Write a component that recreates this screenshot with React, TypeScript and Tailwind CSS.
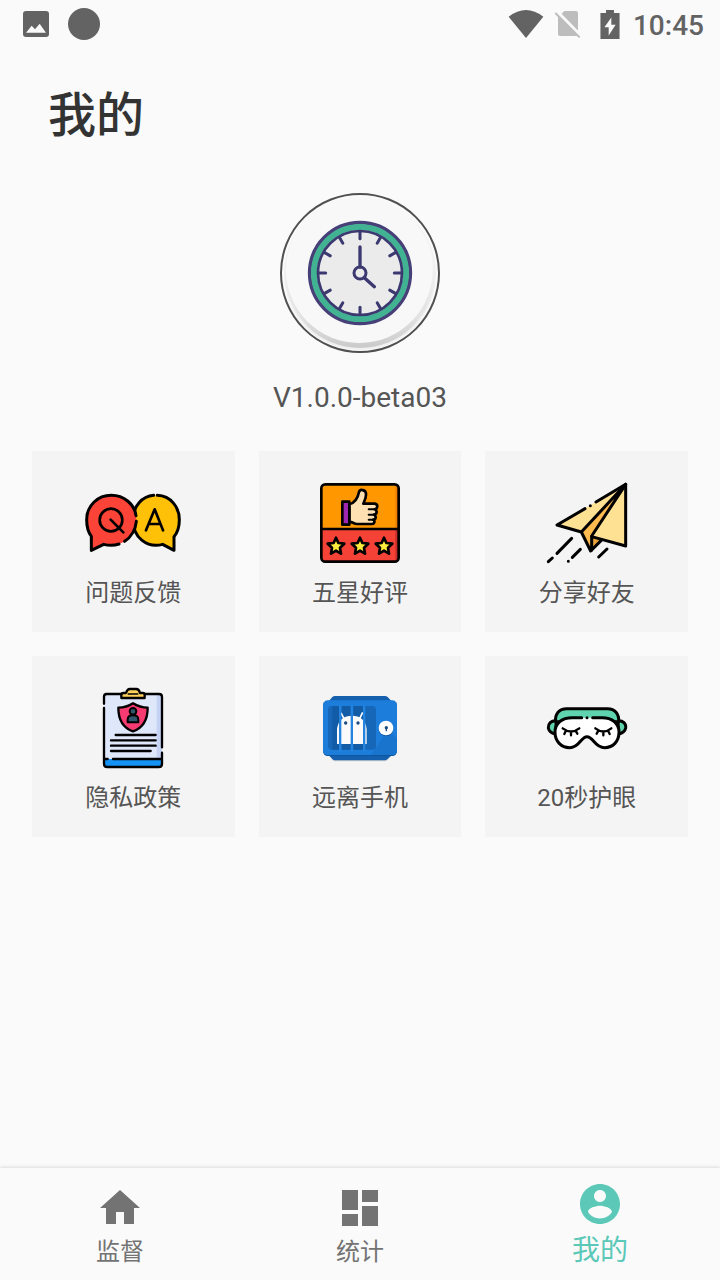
import { useState } from 'react'
import type { ComponentType } from 'react'
import { MdDashboard, MdHome } from 'react-icons/md'

const STAR = 'M0 -25 L7 -9 L25 -7 L12 5 L15 23 L0 14 L-15 23 L-12 5 L-25 -7 L-7 -9 Z'

function ClockLogo() {
  const ticks = [0, 30, 60, 90, 120, 150, 180, 210, 240, 270, 300, 330]
  return (
    <svg className="size-40" viewBox="0 0 480 480" aria-hidden>
      <defs>
        <linearGradient id="rim" x1="0" y1="0" x2="0" y2="1">
          <stop offset="0.3" stopColor="#f8f8f8" />
          <stop offset="0.8" stopColor="#e2e2e2" />
          <stop offset="1" stopColor="#cacaca" />
        </linearGradient>
      </defs>
      <circle cx="240" cy="240" r="237" fill="#fafafa" />
      <circle cx="240" cy="243" r="228" fill="#f0f0f0" />
      <circle cx="240" cy="241" r="224" fill="url(#rim)" />
      <circle cx="238" cy="230" r="220" fill="#f8f8f8" />
      <circle cx="240" cy="240" r="237" fill="none" stroke="#505050" strokeWidth="6" />
      <circle cx="240" cy="240" r="127" fill="#ebebeb" />
      <circle cx="240" cy="240" r="151" fill="none" stroke="#463f78" strokeWidth="11" />
      <circle cx="240" cy="240" r="138" fill="none" stroke="#41b393" strokeWidth="18" />
      <circle cx="240" cy="240" r="126" fill="none" stroke="#3b3970" strokeWidth="8" />
      <g stroke="#3b3970" strokeWidth="9" strokeLinecap="round" fill="none">
        {ticks.map((deg) => (
          <path key={deg} d="M240 116 V137" transform={`rotate(${deg} 240 240)`} />
        ))}
        <path d="M240 222 V162 M253 254 L283 281" strokeWidth="10" />
        <circle cx="240" cy="240" r="18" strokeWidth="9" />
      </g>
    </svg>
  )
}

function QuestionIcon() {
  return (
    <svg className="size-24" viewBox="33 -15 288 288" aria-hidden>
      <g stroke="#000" strokeWidth="9" strokeLinecap="round" strokeLinejoin="round">
        <path
          d="M250 46 C291 48 316 82 316 119 C316 142 310 158 300 170 V211 L266 193 C220 205 177 174 177 119 C177 78 205 49 239 46"
          fill="#ffc107"
        />
        <path
          d="M144 188 C128 196 105 198 89 193 L52 211 V169 C43 157 38 143 38 119 C38 77 71 46 112 46 C153 46 187 77 187 119 C187 148 171 174 144 188"
          fill="#fb4437"
          stroke="none"
        />
        <path
          d="M135 192 C120 197 105 197 89 193 L52 211 V169 C43 157 38 143 38 119 C38 77 71 46 112 46 C149 46 181 71 186 107 M187 124 C185 147 172 171 152 184"
          fill="none"
        />
        <g fill="none" strokeWidth="8">
          <circle cx="111" cy="120" r="34" />
          <path d="M110 119 L148 157 M216 151 L242 88 L267 151 M225 132 H258" />
        </g>
      </g>
    </svg>
  )
}

function RatingIcon() {
  return (
    <svg className="size-24" viewBox="36 0 288 288" aria-hidden>
      <rect x="64" y="28" width="232" height="232" rx="12" fill="#ff9800" />
      <path d="M64 162 H296 V248 Q296 260 284 260 H76 Q64 260 64 248 Z" fill="#f44336" />
      <path d="M286 30 H296 V162 H286Z" fill="#ef7d00" />
      <path d="M286 162 H296 V258 H286Z" fill="#c92e2a" />
      <g stroke="#000" strokeWidth="8" strokeLinejoin="round" strokeLinecap="round">
        <rect x="64" y="28" width="232" height="232" rx="12" fill="none" />
        <path d="M64 162 H296" />
        <path
          d="M148 88 C166 83 173 72 177 51 C180 41 197 44 198 56 C199 68 194 77 190 86 H224 C235 88 234 101 224 103 C233 106 231 118 222 119 C230 122 228 134 220 134 C226 138 223 147 216 147 H171 C162 147 160 142 148 140 Z"
          fill="#ffe0b2"
        />
        <path d="M206 103 H224 M206 119 H222 M206 134 H219" fill="none" strokeWidth="6" />
        <rect x="127" y="80" width="21" height="69" fill="#9c27b0" />
        {[108, 180, 252].map((x) => (
          <path key={x} d={STAR} transform={`translate(${x} 213)`} fill="#ffeb3b" strokeWidth="8" />
        ))}
      </g>
    </svg>
  )
}

function ShareIcon() {
  return (
    <svg className="size-24" viewBox="27 0 288 288" aria-hidden>
      <path d="M288 28 L81 150 L154 171 Z" fill="#ffe194" />
      <path d="M288 28 L187 185 L287 213 Z" fill="#ffe194" />
      <path d="M288 28 L154 171 L182 228 L187 185 Z" fill="#fdbb4f" />
      <path d="M187 185 L214 194 L182 228 Z" fill="#e8a33d" />
      <g fill="none" stroke="#000" strokeWidth="9" strokeLinecap="round" strokeLinejoin="round">
        <path d="M165 101 L81 150 L154 171 L182 228 L213 197 M198 81 L287 28 V213 L185 185 V226" />
        <path d="M287 28 L154 171 M287 28 L185 183 M181 92 V92" />
        <path d="M125 190 L81 235 M67 249 L55 260 M151 223 L127 247 M115 259 V259 M231 222 L206 246" />
      </g>
    </svg>
  )
}

function PrivacyIcon() {
  return (
    <svg className="size-24" viewBox="33 0 288 288" aria-hidden>
      <rect x="90" y="42" width="174" height="219" rx="10" fill="#dfe7fb" />
      <path d="M248 42 H264 V237 H248Z" fill="#c6d2f3" />
      <path d="M90 237 H264 V251 Q264 261 254 261 H100 Q90 261 90 251 Z" fill="#1493f5" />
      <g fill="none" stroke="#000" strokeWidth="7" strokeLinecap="round" strokeLinejoin="round">
        <path d="M90 71 V50 Q90 42 98 42 H255 Q264 42 264 51 V202 M264 218 V251 Q264 261 254 261 H100 Q90 261 90 251 V84 M91 237 H101 M117 237 H263" />
        <path d="M142 54 V45 Q142 39 149 39 H156 Q160 27 167 27 H187 Q195 27 198 39 H206 Q212 39 212 45 V54 Z" fill="#ffd15c" />
        <path d="M163 42 H191" strokeWidth="5" />
        <path d="M177 70 C193 80 207 83 221 83 C221 119 208 143 177 154 C146 143 133 119 133 83 C148 83 162 80 177 70 Z" fill="#f53b72" />
        <path d="M161 127 V119 C161 109 167 106 177 106 C187 106 193 109 193 119 V127 Z" fill="#30566b" strokeWidth="6" />
        <circle cx="177" cy="94" r="10" fill="#30566b" strokeWidth="6" />
        <path d="M125 165 H245 M111 181 H245 M111 197 H245 M111 213 H230" />
      </g>
    </svg>
  )
}

function JailIcon() {
  return (
    <svg className="size-24" viewBox="36 0 288 288" aria-hidden>
      <path d="M90 229 H272 L262 241 Q259 244 255 244 H105 Q100 244 97 240Z" fill="#000" fillOpacity="0.15" />
      <path d="M84 66 L97 51 Q100 48 105 48 H255 Q260 48 263 51 L277 66 V224 L262 238 Q259 241 255 241 H105 Q100 241 97 237 L86 226Z" fill="#1560ae" />
      <rect x="69" y="63" width="222" height="165" rx="14" fill="#0d559f" />
      <rect x="69" y="61" width="222" height="164" rx="14" fill="#1c7ddb" />
      <path d="M274 159 L291 176 V212 Q289 224 277 225 H212 L228 205 L250 168 Z" fill="#1974ce" />
      <rect x="84" y="78" width="144" height="131" rx="11" fill="#1667b8" />
      <path d="M97 78 H117 V209 H97Z M126 78 H152 V209 H126Z M161 78 H189 V209 H161Z" fill="#125ba6" />
      <path d="M111 192 V147 C114 120 132 107 156 107 C180 107 197 120 200 147 V192 Z" fill="#fafafa" />
      <path d="M132 116 L123 99 M179 116 L188 97" stroke="#fff" strokeWidth="5" fill="none" />
      <circle cx="137" cy="129" r="5" fill="#174c82" />
      <circle cx="174" cy="129" r="5" fill="#174c82" />
      <path d="M117 77 H124 V215 H117Z M152 77 H159 V215 H152Z M189 77 H196 V215 H189Z" fill="#2583e0" />
      <circle cx="258" cy="147" r="22" fill="#125ba5" />
      <circle cx="258" cy="144" r="22" fill="#fff" />
      <circle cx="259" cy="143" r="5" fill="#174c82" />
      <path d="M257 144 H261 V154 H257Z" fill="#174c82" />
    </svg>
  )
}

function EyeMaskIcon() {
  return (
    <svg className="size-24" viewBox="27 0 288 288" aria-hidden>
      <g fill="none" stroke="#000" strokeWidth="9" strokeLinecap="round" strokeLinejoin="round">
        <path d="M79 122 C63 121 54 131 55 144 C57 154 66 160 76 162 Z M264 122 C279 121 289 131 287 144 C285 154 275 160 266 162 Z" fill="#5fd3ae" />
        <path d="M77 125 C74 101 88 86 110 86 H233 C254 86 268 101 266 125 Z" fill="#5fd3ae" />
        <path
          d="M171 113 H127 C96 113 75 129 75 157 C75 184 94 203 119 203 C149 203 152 170 171 170 C190 170 194 203 224 203 C249 203 267 184 267 157 C267 129 246 113 216 113 Z"
          fill="#fff"
          stroke="none"
        />
        <path d="M155 113 H127 C96 113 75 129 75 157 C75 184 94 203 119 203 C149 203 152 170 171 170 C190 170 194 203 224 203 C249 203 267 184 267 157 C267 129 246 113 216 113 H188 M171 113 V113" />
        <path d="M98 145 Q123 164 148 145 M107 154 L103 162 M123 156 V166 M138 154 L142 161" strokeWidth="7" />
        <path d="M196 145 Q220 164 244 145 M204 154 L200 161 M220 156 V166 M235 154 L239 162" strokeWidth="7" />
      </g>
    </svg>
  )
}

function AccountIcon() {
  return (
    <svg className="size-12" viewBox="0 0 24 24" fill="currentColor" aria-hidden>
      <path
        fillRule="evenodd"
        d="M12 2C6.48 2 2 6.48 2 12s4.48 10 10 10 10-4.48 10-10S17.52 2 12 2zm0 3c1.66 0 3 1.34 3 3s-1.34 3-3 3-3-1.34-3-3 1.34-3 3-3zm0 14.2c-2.5 0-4.71-1.28-6-3.22.03-1.99 4-3.08 6-3.08 1.99 0 5.97 1.09 6 3.08-1.29 1.94-3.5 3.22-6 3.22z"
      />
    </svg>
  )
}

function StatusBar() {
  return (
    <div className="flex h-12 items-center justify-between pr-4 pl-[23px] text-[#636363]">
      <div className="flex items-center gap-[19px]">
        <svg className="size-[26px]" viewBox="0 0 78 78" fill="currentColor" aria-hidden>
          <rect width="78" height="78" rx="9" />
          <path d="M9 65 L26 44 L36 55 L50 38 L69 65 Z" fill="#fafafa" />
        </svg>
        <span className="size-8 rounded-full bg-current" />
      </div>
      <div className="flex items-center">
        <svg className="mr-2.5 h-7 w-9" viewBox="0 0 108 84" fill="currentColor" aria-hidden>
          <path d="M2 20 Q54 -20 106 20 L54 84 Z" />
        </svg>
        <svg className="mr-[18px] size-7" viewBox="0 0 84 84" aria-hidden>
          <path d="M31 3 H66 Q72 3 72 9 V78 H18 Q12 78 12 72 V22 Z" fill="#bdbdbd" />
          <path d="M8 5 L80 79" stroke="#fafafa" strokeWidth="12" />
          <path d="M4 9 L77 82" stroke="#bdbdbd" strokeWidth="6" />
        </svg>
        <svg className="mr-[13px] h-[29px] w-5" viewBox="0 0 60 88" fill="currentColor" aria-hidden>
          <path fillRule="evenodd" d="M18 0 H42 V9 H59 V88 H1 V9 H18 Z M34 23 L13 52 H26 V77 L47 45 H34 Z" />
        </svg>
        <span className="pt-1 text-[28px] leading-8 font-medium">10:45</span>
      </div>
    </div>
  )
}

const TILES: Array<{ label: string; icon: ComponentType }> = [
  { label: '问题反馈', icon: QuestionIcon },
  { label: '五星好评', icon: RatingIcon },
  { label: '分享好友', icon: ShareIcon },
  { label: '隐私政策', icon: PrivacyIcon },
  { label: '远离手机', icon: JailIcon },
  { label: '20秒护眼', icon: EyeMaskIcon },
]

const TABS = [
  { id: 'watch', label: '监督', icon: <MdHome className="size-12" /> },
  { id: 'stats', label: '统计', icon: <MdDashboard className="size-12" /> },
  { id: 'mine', label: '我的', icon: <AccountIcon /> },
]

export default function App() {
  const [tab, setTab] = useState('mine')

  return (
    <div className="flex min-h-screen flex-col bg-[#fafafa] font-['Roboto','Noto_Sans_CJK_SC',sans-serif] text-[#555555]">
      <StatusBar />

      <main className="flex-1">
        <h1 className="px-12 pt-9 text-5xl leading-16 font-medium text-[#333333]">我的</h1>

        <section className="mt-[45px] flex flex-col items-center">
          <ClockLogo />
          <p className="mt-[25px] text-[28px] leading-10">V1.0.0-beta03</p>
        </section>

        <section className="mt-[33px] grid grid-cols-3 gap-6 px-8 pb-8">
          {TILES.map(({ label, icon: Icon }) => (
            <button
              key={label}
              type="button"
              className="flex flex-col items-center bg-[#f4f4f4] pt-6 pb-[21px]"
            >
              <Icon />
              <span className="mt-1 text-2xl leading-9">{label}</span>
            </button>
          ))}
        </section>
      </main>

      <nav className="sticky bottom-0 grid h-28 grid-cols-3 bg-[#fafafa] shadow-[0_-1px_3px_rgba(0,0,0,0.12)]">
        {TABS.map(({ id, label, icon }) => (
          <button
            key={id}
            type="button"
            onClick={() => setTab(id)}
            className={`flex flex-col items-center gap-0.5 ${
              tab === id
                ? 'pt-3 text-[28px] leading-[42px] text-[#5bc8b8]'
                : 'pt-4 text-2xl leading-9 text-[#737373]'
            }`}
          >
            {icon}
            <span>{label}</span>
          </button>
        ))}
      </nav>
    </div>
  )
}
